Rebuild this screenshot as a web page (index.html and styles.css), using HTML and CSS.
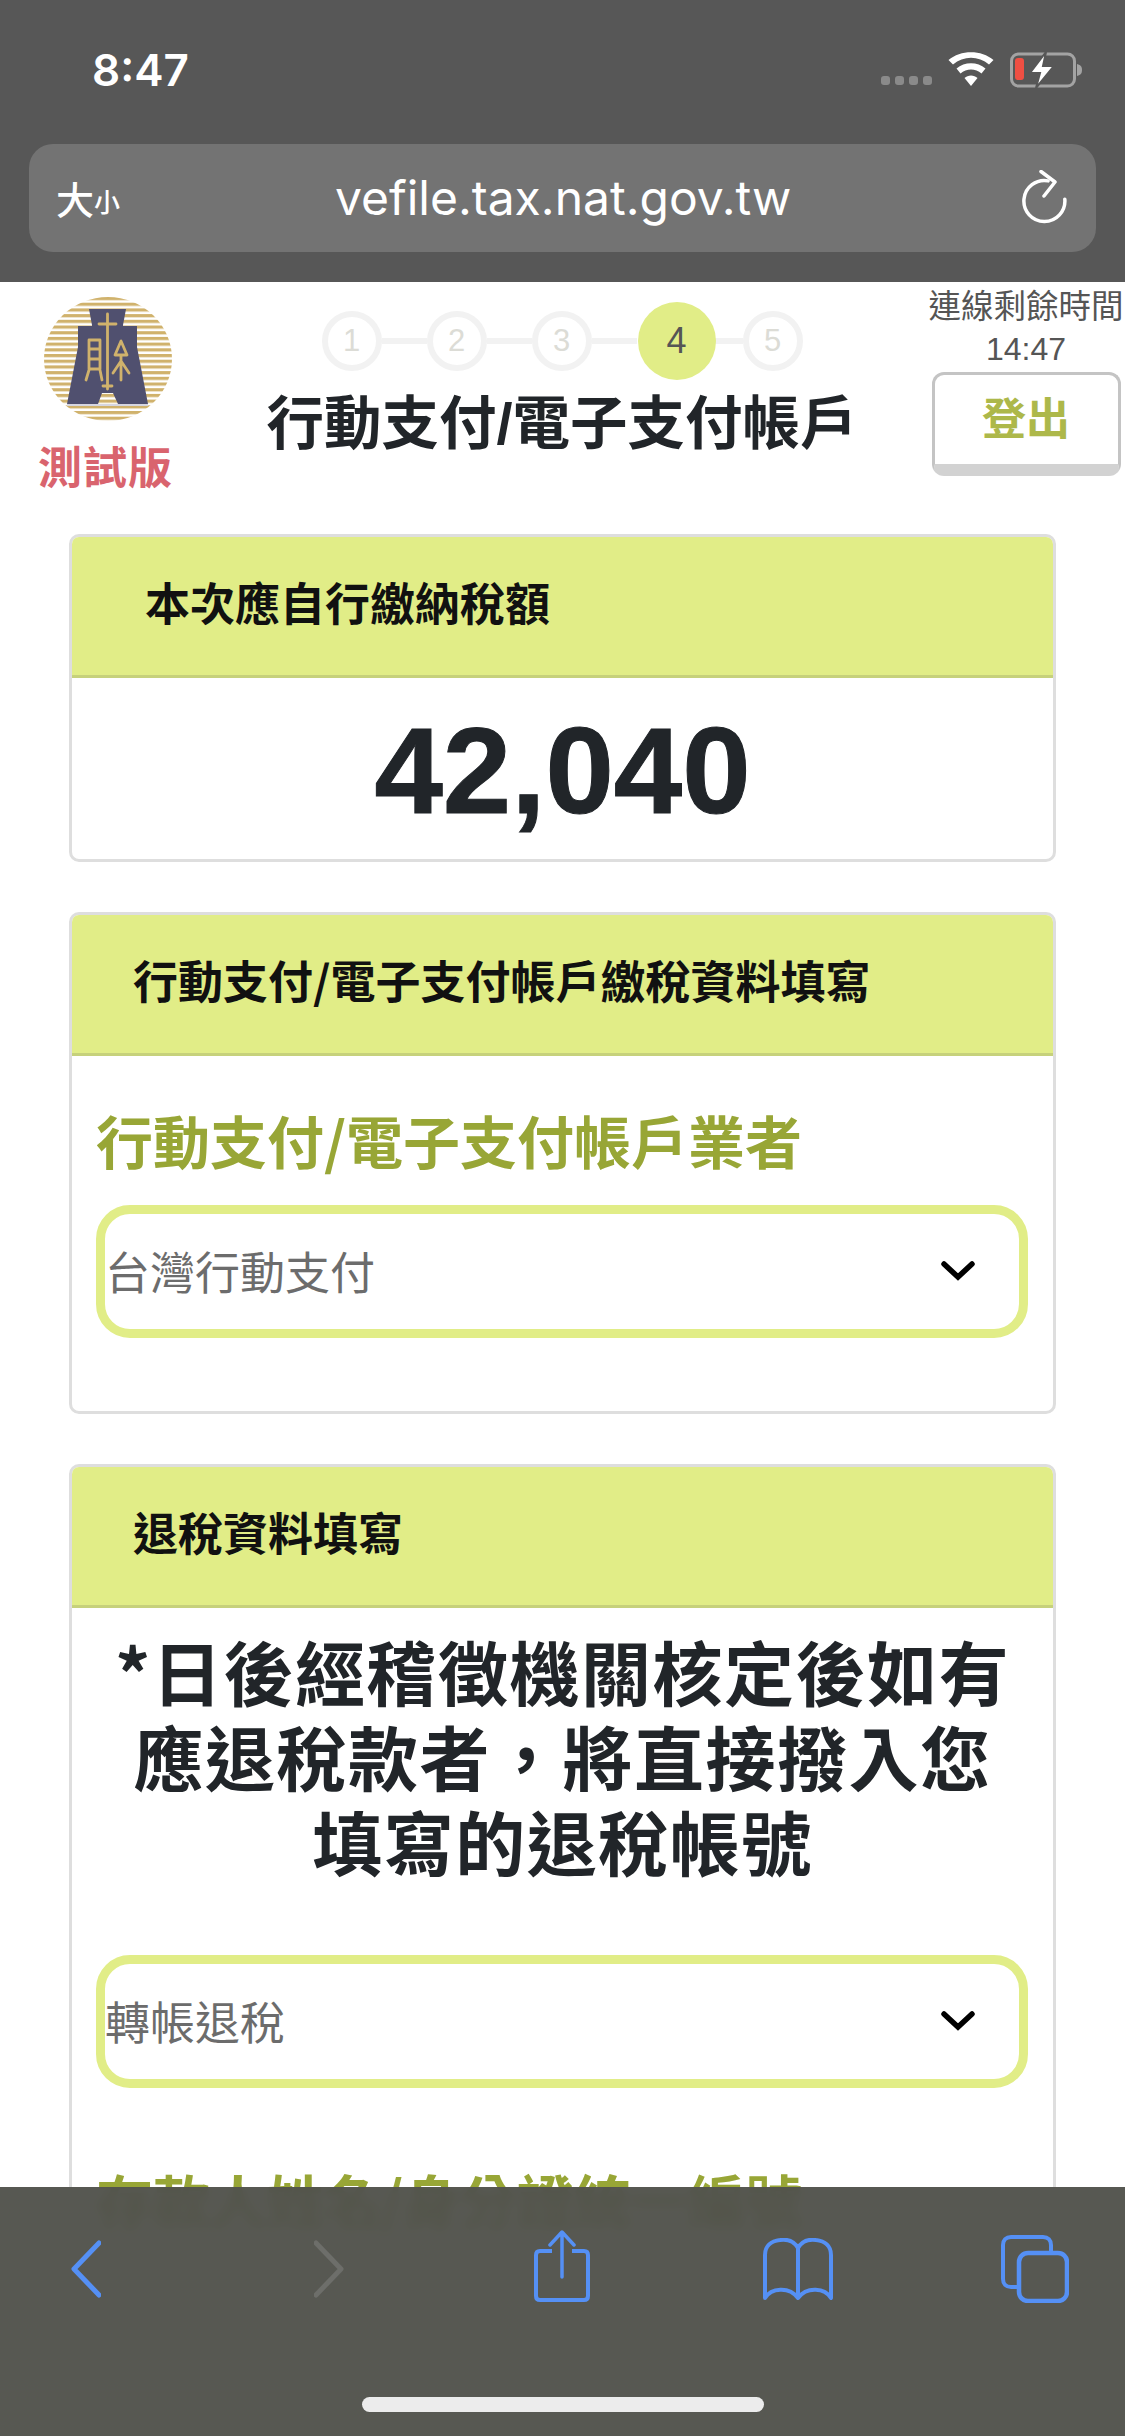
FILE: index.html
```html
<!DOCTYPE html>
<html lang="zh-Hant">
<head>
<meta charset="utf-8">
<title>行動支付/電子支付帳戶</title>
<link rel="stylesheet" href="styles.css">
</head>
<body>
<div class="phone">
  <header class="chrome">
    <div class="status">
      <span class="clock">8:47</span>
      <div class="status-icons">
        <span class="signal"><i></i><i></i><i></i><i></i></span>
        <svg class="wifi" viewBox="0 0 46 34" width="46" height="34"><path d="M23 34 L16.500 26 C20 22.500 26 22.500 29.500 26 Z" fill="#fff"/><path d="M12.500 21.500 L8.500 16.500 C16.500 9.500 29.500 9.500 37.500 16.500 L33.500 21.500 C27.500 16 18.500 16 12.500 21.500 Z" fill="#fff"/><path d="M5 12.500 L0.500 8 C12.500 -2.500 33.500 -2.500 45.500 8 L41 12.500 C30.500 3.500 15.500 3.500 5 12.500 Z" fill="#fff"/></svg>
        <svg class="battery" viewBox="0 0 74 36" width="74" height="36"><rect x="1.500" y="2" width="63" height="32" rx="7" fill="none" stroke="#a3a3a3" stroke-width="3"/><rect x="5" y="6" width="9" height="22" rx="3" fill="#ef4f43"/><path d="M67 12 c4 1 5 3 5 6 s-1 5 -5 6 Z" fill="#a3a3a3"/><path d="M36 0 L20 21 H30 L26 36 L44 14 H33 Z" fill="#fff" stroke="#575757" stroke-width="2"/></svg>
      </div>
    </div>
    <div class="urlbar">
      <span class="aa"><b>大</b><small>小</small></span>
      <span class="url">vefile.tax.nat.gov.tw</span>
      <svg class="reload" viewBox="0 0 46 56" width="46" height="56"><path d="M29 11.500 A20.500 20.500 0 1 0 43 32" fill="none" stroke="#fff" stroke-width="3.500" stroke-linecap="round" transform="rotate(-8 23 32)"/><path d="M19 1.500 L33 12 L22 26" fill="none" stroke="#fff" stroke-width="3.500" stroke-linecap="round" stroke-linejoin="round"/></svg>
    </div>
  </header>

  <main class="page">
    <section class="topline">
      <div class="brand">
        <svg class="logo" viewBox="0 0 128 124" width="128" height="124">
          <defs>
            <clipPath id="disc"><ellipse cx="64" cy="62" rx="64" ry="62"/></clipPath>
            <pattern id="stripes" width="10" height="5.700" patternUnits="userSpaceOnUse"><rect width="10" height="3.200" fill="#d0b26c"/></pattern>
          </defs>
          <g clip-path="url(#disc)"><rect width="128" height="124" fill="url(#stripes)"/></g>
          <path d="M45 12 H82 L79 28 V29 H93 V50 L104 107 H74 L69 96 H58 L54 107 H23 L34 50 V29 H48 V28 Z" fill="#50506f"/>
          <rect x="23" y="107" width="81" height="2" fill="#d6d6e0"/>
          <g fill="none" stroke="#d0b26c" stroke-width="2.800" stroke-linecap="round" stroke-linejoin="round">
            <path d="M63.500 17 V92 M55 27 H72 M59 89 H68"/>
            <path d="M45 43 H56 V72 H45 Z M45 52 H56 M45 62 H56 M45 73 L42 83 M56 73 L58 83"/>
            <path d="M77 44 L71 58 H83 Z M77 58 V83 M69 76 L77 64 L85 76"/>
          </g>
        </svg>
        <strong class="trial">測試版</strong>
      </div>
      <div class="progress">
        <ol class="steps">
          <li class="step">1</li><li class="link"></li>
          <li class="step">2</li><li class="link"></li>
          <li class="step">3</li><li class="link"></li>
          <li class="step current">4</li><li class="link"></li>
          <li class="step">5</li>
        </ol>
        <h1 class="title">行動支付/電子支付帳戶</h1>
      </div>
      <div class="session">
        <span class="session-label">連線剩餘時間</span>
        <span class="session-time">14:47</span>
        <button class="logout">登出</button>
      </div>
    </section>

    <section class="card card-amount">
      <h2 class="card-head head-wide">本次應自行繳納稅額</h2>
      <div class="amount">42,040</div>
    </section>

    <section class="card card-provider">
      <h2 class="card-head">行動支付/電子支付帳戶繳稅資料填寫</h2>
      <div class="card-body">
        <h3 class="field-label">行動支付/電子支付帳戶業者</h3>
        <div class="select"><span>台灣行動支付</span><svg class="chev" viewBox="0 0 34 20" width="34" height="20"><path d="M3 3 L17 16 L31 3" fill="none" stroke="#000" stroke-width="5.500" stroke-linecap="round" stroke-linejoin="miter"/></svg></div>
      </div>
    </section>

    <section class="card card-refund">
      <h2 class="card-head">退稅資料填寫</h2>
      <div class="card-body">
        <p class="notice">*日後經稽徵機關核定後如有<br>應退稅款者，將直接撥入您<br>填寫的退稅帳號</p>
        <div class="select"><span>轉帳退稅</span><svg class="chev" viewBox="0 0 34 20" width="34" height="20"><path d="M3 3 L17 16 L31 3" fill="none" stroke="#000" stroke-width="5.500" stroke-linecap="round" stroke-linejoin="miter"/></svg></div>
        <h3 class="field-label label-after">存款人姓名/身分證統一編號</h3>
      </div>
    </section>
  </main>

  <nav class="toolbar">
    <svg viewBox="0 0 30 58" width="30" height="58" class="t-back"><path d="M28 3 L3 29 L28 55" fill="none" stroke="#5590f5" stroke-width="5" stroke-linecap="round" stroke-linejoin="round"/></svg>
    <svg viewBox="0 0 30 58" width="30" height="58" class="t-forward"><path d="M2 3 L27 29 L2 55" fill="none" stroke="#6d6e6a" stroke-width="5" stroke-linecap="round" stroke-linejoin="round"/></svg>
    <svg viewBox="0 0 56 72" width="56" height="72" class="t-share"><path d="M18 21 H6 C3.500 21 2 22.500 2 25 V66 C2 68.500 3.500 70 6 70 H50 C52.500 70 54 68.500 54 66 V25 C54 22.500 52.500 21 50 21 H38" fill="none" stroke="#5590f5" stroke-width="4"/><path d="M28 47 V3 M16 15 L28 2 L40 15" fill="none" stroke="#5590f5" stroke-width="3.500" stroke-linecap="round" stroke-linejoin="round"/></svg>
    <svg viewBox="0 0 70 62" width="70" height="62" class="t-book"><path d="M35 10 C31 3 24 1 17 2 C8 3 2 8 2 17 V60 C8 50 26 48 35 60 C44 48 62 50 68 60 V17 C68 8 62 3 53 2 C46 1 39 3 35 10 Z M35 10 V60" fill="none" stroke="#5590f5" stroke-width="4" stroke-linejoin="round"/></svg>
    <svg viewBox="0 0 68 68" width="68" height="68" class="t-tabs"><path d="M50 18 V10 C50 5 47 2 42 2 H10 C5 2 2 5 2 10 V44 C2 49 5 52 10 52 H17" fill="none" stroke="#5590f5" stroke-width="4"/><rect x="18" y="18" width="48" height="48" rx="9" fill="none" stroke="#5590f5" stroke-width="4.500"/></svg>
    <span class="home"></span>
  </nav>
</div>
</body>
</html>
```

FILE: styles.css
```css
* { box-sizing: border-box; }
html, body { margin: 0; padding: 0; background: #fff; }
body { font-family: "Liberation Sans", "Noto Sans CJK TC", sans-serif; color: #212529; }
.phone { position: relative; width: 1125px; height: 2436px; overflow: hidden; display: flex; flex-direction: column; }

.chrome { flex: 0 0 282px; background: #575757; padding: 52px 29px 0; }
.status { height: 92px; display: flex; justify-content: space-between; align-items: flex-start; padding: 0 12px 0 63px; }
.clock { font: 600 44px/36px Inter, sans-serif; color: #fff; }
.status-icons { display: flex; align-items: flex-start; }
.signal { display: flex; gap: 5px; margin: 24px 16px 0 0; }
.signal i { width: 9px; height: 9px; border-radius: 3px; background: #8a8a8a; }
.wifi { margin-right: 16px; }
.urlbar { height: 108px; background: #737373; border-radius: 24px; display: flex; align-items: center; padding: 0 28px 0 27px; position: relative; }
.aa { color: #fff; display: flex; align-items: flex-end; font-family: "Noto Sans CJK TC", sans-serif; }
.aa b { font-size: 38px; line-height: 44px; font-weight: 500; }
.aa small { font-size: 26px; line-height: 38px; font-weight: 500; }
.url { flex: 1; text-align: center; font: 400 48px/60px Inter, sans-serif; color: #fff; padding-right: 16px; }

.page { flex: 1; min-height: 0; padding: 0 69px; }
.topline { display: flex; height: 252px; margin: 0 -69px; position: relative; }
.brand { width: 197px; padding: 15px 0 0 44px; flex: none; }
.logo { display: block; }
.trial { display: block; width: 140px; margin: 14px 0 0 -6px; font: 700 44px/60px "Noto Sans CJK TC", sans-serif; color: #d9646e; letter-spacing: 1px; white-space: nowrap; }
.progress { flex: 1; display: flex; flex-direction: column; align-items: center; padding-top: 20px; }
.steps { list-style: none; margin: 0; padding: 0; display: flex; align-items: center; height: 78px; }
.step { width: 60px; height: 60px; border-radius: 50%; border: 6px solid #f2f2f2; color: #dcdcd6; background: #fff; font: 400 31px/48px "Liberation Sans", sans-serif; text-align: center; }
.step.current { width: 78px; height: 78px; border: 0; background: #e1ed87; color: #555; font-size: 36px; line-height: 78px; margin: 0 -18px 0 1px; position: relative; }
.link { width: 45px; height: 6px; background: #f2f2f2; }
.title { margin: 8px 0 0; font: 700 57.500px/72px "Liberation Sans", "Noto Sans CJK TC", sans-serif; white-space: nowrap; }
.session { width: 198px; flex: none; display: flex; flex-direction: column; align-items: center; color: #555; }
.session-label { font: 400 32.500px/44px "Noto Sans CJK TC", sans-serif; white-space: nowrap; }
.session-time { font: 400 32px/38px "Liberation Sans", sans-serif; margin-top: 4px; }
.logout { width: 189px; height: 104px; margin-top: 4px; background: #fff; border: 3px solid #c4c4c4; border-bottom: 12px solid #d2d2d2; border-radius: 12px; color: #adb84a; font: 700 44px/62px "Noto Sans CJK TC", sans-serif; padding: 0 0 8px; }

.card { width: 987px; border: 3px solid #dedede; border-radius: 10px; background: #fff; margin-bottom: 50px; }
.card-head { margin: 0; height: 141px; background: #e1ed87; border-bottom: 3px solid #c6d17b; border-radius: 7px 7px 0 0; font: 700 45px/129px "Noto Sans CJK TC", sans-serif; padding-left: 61px; color: #111; white-space: nowrap; }
.head-wide { padding-left: 73px; }
.amount { height: 181px; text-align: center; font: 700 123px/186px "Liberation Sans", sans-serif; color: #212529; -webkit-text-stroke: 1px #212529; }
.card-body { padding: 0 24px; }
.card-provider { height: 502px; }
.card-refund { height: 1000px; }
.field-label { margin: 0; padding-top: 41px; font: 700 57px/84px "Noto Sans CJK TC", sans-serif; color: #98a636; white-space: nowrap; }
.select { height: 133px; width: 932px; border: 9px solid #e1ed87; border-radius: 34px; display: flex; align-items: center; justify-content: space-between; padding: 0 44px 2px 0; color: #6c6c6c; font: 400 45px/60px "Noto Sans CJK TC", sans-serif; }
.card-provider .select { margin-top: 24px; }
.notice { margin: 20px 0 0; text-align: center; font: 700 70px/85px "Noto Sans CJK TC", sans-serif; color: #212529; letter-spacing: 1.500px; }
.card-refund .select { margin-top: 72px; }
.label-after { padding-top: 68px; }

.toolbar { position: absolute; left: 0; right: 0; bottom: 0; height: 249px; background: rgba(80, 81, 75, .96); backdrop-filter: blur(6px); }
.toolbar svg { position: absolute; }
.t-back { left: 71px; top: 53px; }
.t-forward { left: 314px; top: 53px; }
.t-share { left: 534px; top: 43px; }
.t-book { left: 763px; top: 51px; }
.t-tabs { left: 1001px; top: 48px; }
.home { position: absolute; left: 362px; top: 210px; width: 402px; height: 15px; border-radius: 8px; background: #ececec; }
```
